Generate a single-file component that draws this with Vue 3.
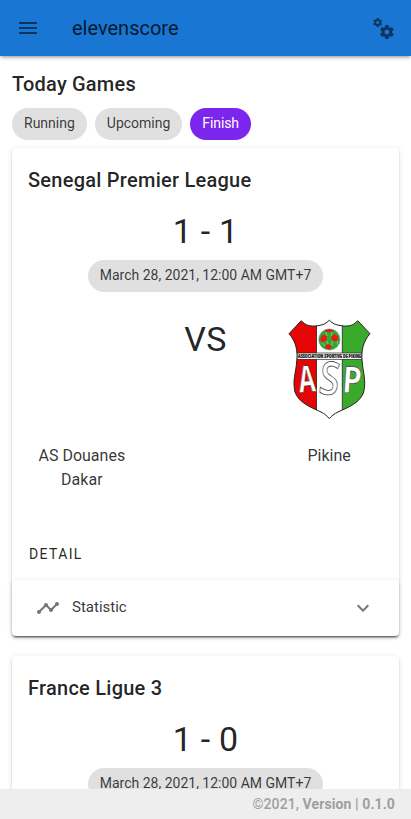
<script setup>
const filters = [
  { label: 'Running', active: false },
  { label: 'Upcoming', active: false },
  { label: 'Finish', active: true },
]
const games = [
  { league: 'Senegal Premier League', score: '1 - 1', home: 'AS Douanes Dakar', away: 'Pikine', date: 'March 28, 2021, 12:00 AM GMT+7' },
  { league: 'France Ligue 3', score: '1 - 0', home: '', away: '', date: 'March 28, 2021, 12:00 AM GMT+7' },
]
</script>

<template>
  <div class="app">
    <header class="bar">
      <svg class="icon" viewBox="0 0 24 24"><path d="M3,6H21V8H3V6M3,11H21V13H3V11M3,16H21V18H3V16Z" /></svg>
      <div class="brand">elevenscore</div>
      <svg class="icon" viewBox="0 0 24 24"><path d="M15.9,18.45C17.25,18.45 18.35,17.35 18.35,16C18.35,14.65 17.25,13.55 15.9,13.55C14.54,13.55 13.45,14.65 13.45,16C13.45,17.35 14.54,18.45 15.9,18.45M21.1,16.68L22.58,17.84C22.71,17.95 22.75,18.13 22.66,18.29L21.26,20.71C21.17,20.86 21,20.92 20.83,20.86L19.09,20.16C18.73,20.44 18.33,20.67 17.91,20.85L17.64,22.7C17.62,22.87 17.47,23 17.3,23H14.5C14.32,23 14.18,22.87 14.15,22.7L13.89,20.85C13.46,20.67 13.07,20.44 12.71,20.16L10.96,20.86C10.81,20.92 10.62,20.86 10.54,20.71L9.14,18.29C9.05,18.13 9.09,17.95 9.22,17.84L10.7,16.68L10.65,16L10.7,15.31L9.22,14.16C9.09,14.05 9.05,13.86 9.14,13.71L10.54,11.29C10.62,11.13 10.81,11.07 10.96,11.13L12.71,11.84C13.07,11.56 13.46,11.32 13.89,11.15L14.15,9.29C14.18,9.13 14.32,9 14.5,9H17.3C17.47,9 17.62,9.13 17.64,9.29L17.91,11.15C18.33,11.32 18.73,11.56 19.09,11.84L20.83,11.13C21,11.07 21.17,11.13 21.26,11.29L22.66,13.71C22.75,13.86 22.71,14.05 22.58,14.16L21.1,15.31L21.15,16L21.1,16.68M6.69,8.07C7.56,8.07 8.26,7.37 8.26,6.5C8.26,5.63 7.56,4.92 6.69,4.92A1.58,1.58 0 0,0 5.11,6.5C5.11,7.37 5.82,8.07 6.69,8.07M10.03,6.94L11,7.68C11.07,7.75 11.09,7.87 11.03,7.97L10.13,9.53C10.08,9.63 9.96,9.67 9.86,9.63L8.74,9.18L8,9.62L7.81,10.81C7.79,10.92 7.7,11 7.59,11H5.79C5.67,11 5.58,10.92 5.56,10.81L5.4,9.62L4.64,9.18L3.52,9.63C3.41,9.67 3.3,9.63 3.24,9.53L2.34,7.97C2.28,7.87 2.31,7.75 2.39,7.68L3.34,6.94L3.31,6.5L3.34,6.06L2.39,5.32C2.31,5.25 2.28,5.13 2.34,5.03L3.24,3.47C3.3,3.37 3.41,3.33 3.52,3.38L4.63,3.82L5.4,3.38L5.56,2.19C5.58,2.08 5.67,2 5.79,2H7.59C7.7,2 7.79,2.08 7.81,2.19L8,3.38L8.74,3.82L9.86,3.38C9.96,3.33 10.08,3.37 10.13,3.47L11.03,5.03C11.09,5.13 11.07,5.25 11,5.32L10.03,6.06L10.06,6.5L10.03,6.94Z" /></svg>
    </header>

    <main class="content">
      <h1 class="heading">Today Games</h1>
      <div class="filters">
        <span v-for="f in filters" :key="f.label" class="chip" :class="{ active: f.active }">{{ f.label }}</span>
      </div>

      <article v-for="g in games" :key="g.league" class="card">
        <h2 class="league">{{ g.league }}</h2>
        <div class="score">{{ g.score }}</div>
        <div class="date"><span class="chip">{{ g.date }}</span></div>
        <template v-if="g.home">
          <div class="teams">
            <div class="team">
              <div class="crest"></div>
              <div class="name">{{ g.home }}</div>
            </div>
            <div class="versus">VS</div>
            <div class="team">
              <div class="crest">
                <svg class="shield" viewBox="0 0 100 112">
                  <defs>
                    <clipPath id="shield-shape">
                      <path d="M9 21.7L21.3 8.7C25.5 13.7 31 14.7 37 13.8C43 13.3 46.5 11.3 49.3 8.2C52.2 11.3 56 13.3 62 13.8C68 14.7 73.5 13.7 77.7 8.7L90 21.7C83 29.5 81 39 82.2 50C83 60 86.3 68 83.7 80C80.5 90.5 68 95.5 59 99.5C54 101.7 51 104.5 49.3 106.6C47.5 104.5 45 101.7 40 99.5C31 95.5 18.5 90.5 15 80C12.3 68 16 60 16.7 50C18 39 16 29.5 9 21.7Z" />
                    </clipPath>
                  </defs>
                  <g clip-path="url(#shield-shape)">
                    <rect width="100" height="112" fill="#fff" />
                    <rect width="36.5" height="112" fill="#e60505" />
                    <rect x="62.3" width="38" height="112" fill="#3aaa2c" />
                    <path d="M36.5 8V108M62.3 8V108" stroke="#222" stroke-width=".8" />
                    <rect x="17" y="41" width="65" height="6.3" fill="#fff" stroke="#222" stroke-width=".7" />
                  </g>
                  <circle cx="49.4" cy="27.5" r="10.6" fill="#34a72d" stroke="#777" stroke-width=".5" />
                  <path d="M44.500 18.500L49 17L54 18.500L51 20L46 20ZM40 27L43 22.500L47 24L46.500 28.500L42 30.500ZM51 24.500L55 22L58.500 25L57 29L52.500 29ZM45 34L48 32L52 34L50 37.500L46 36.500Z" fill="#e51b1b" />
                  <path d="M46 20L47 24M52 20L51 24.500M46.500 28.500L48 32M52.500 29L52 34M42 30.500L45 34M57 29L58 33" stroke="#b5d9ab" stroke-width=".6" fill="none" />
                  <text x="49.500" y="46.100" class="motto" textLength="63" lengthAdjust="spacingAndGlyphs">ASSOCIATION SPORTIVE DE PIKINE</text>
                  <g class="initials">
                    <text x="18.500" y="80" textLength="17" lengthAdjust="spacingAndGlyphs" transform="rotate(-5 28 68)">A</text>
                    <text x="39.500" y="82.500" class="middle" textLength="20" lengthAdjust="spacingAndGlyphs" transform="rotate(7 49 68)">S</text>
                    <text x="62.500" y="81" textLength="19.500" lengthAdjust="spacingAndGlyphs" transform="rotate(4 72 68)">P</text>
                  </g>
                  <path d="M9 21.7L21.3 8.7C25.5 13.7 31 14.7 37 13.8C43 13.3 46.5 11.3 49.3 8.2C52.2 11.3 56 13.3 62 13.8C68 14.7 73.5 13.7 77.7 8.7L90 21.7C83 29.5 81 39 82.2 50C83 60 86.3 68 83.7 80C80.5 90.5 68 95.5 59 99.5C54 101.7 51 104.5 49.3 106.6C47.5 104.5 45 101.7 40 99.5C31 95.5 18.5 90.5 15 80C12.3 68 16 60 16.7 50C18 39 16 29.5 9 21.7Z" fill="none" stroke="#222" stroke-width="1" />
                </svg>
              </div>
              <div class="name">{{ g.away }}</div>
            </div>
          </div>
          <div class="detail">DETAIL</div>
          <div class="panel">
            <svg class="icon" viewBox="0 0 24 24"><path d="M23,8C23,9.1 22.1,10 21,10C20.82,10 20.65,9.97 20.49,9.93L16.93,13.48C16.97,13.64 17,13.82 17,14C17,15.1 16.1,16 15,16C13.9,16 13,15.1 13,14C13,13.82 13.03,13.64 13.07,13.48L10.52,10.93C10.36,10.97 10.18,11 10,11C9.82,11 9.64,10.97 9.48,10.93L4.93,15.49C4.97,15.65 5,15.82 5,16C5,17.1 4.1,18 3,18C1.9,18 1,17.1 1,16C1,14.9 1.9,14 3,14C3.18,14 3.35,14.03 3.51,14.07L8.07,9.52C8.03,9.36 8,9.18 8,9C8,7.9 8.9,7 10,7S12,7.9 12,9C12,9.18 11.97,9.36 11.93,9.52L14.48,12.07C14.64,12.03 14.82,12 15,12C15.18,12 15.36,12.03 15.52,12.07L19.07,8.51C19.03,8.35 19,8.18 19,8A2,2 0 0,1 21,6A2,2 0 0,1 23,8Z" /></svg>
            <span class="panel-title">Statistic</span>
            <svg class="icon" viewBox="0 0 24 24"><path d="M7.41,8.58L12,13.17L16.59,8.58L18,10L12,16L6,10L7.41,8.58Z" /></svg>
          </div>
        </template>
      </article>
    </main>

    <footer class="footer">©2021,&nbsp;<b>Version | 0.1.0</b></footer>
  </div>
</template>

<style>
body {
  background: #fff;
}
</style>

<style scoped>
.app {
  box-sizing: border-box;
  height: 819px;
  overflow: hidden;
  display: flex;
  flex-direction: column;
  font-family: Roboto, sans-serif;
  font-size: 16px;
  line-height: 24px;
  color: rgba(0, 0, 0, 0.87);
  background: #fff;
}
.icon {
  width: 24px;
  height: 24px;
  flex: none;
  fill: rgba(0, 0, 0, 0.54);
}
.bar {
  box-sizing: border-box;
  flex: none;
  height: 56px;
  padding: 0 16px;
  display: flex;
  align-items: center;
  background: #1976d2;
  box-shadow: 0 2px 3px -1px rgba(0, 0, 0, 0.3), 0 2px 5px 0 rgba(0, 0, 0, 0.14);
  z-index: 1;
}
.brand {
  flex: 1;
  padding-left: 32px;
  font-size: 20px;
  color: rgba(0, 0, 0, 0.8);
}
.content {
  flex: 1;
  min-height: 0;
  overflow: hidden;
  padding: 12px 12px 0;
}
.heading,
.league {
  margin: 0;
  font-size: 20px;
  font-weight: 500;
  line-height: 32px;
  letter-spacing: 0.25px;
}
.heading {
  letter-spacing: 0.2px;
}
.filters {
  display: flex;
  gap: 8px;
  padding: 8px 0;
}
.chip {
  box-sizing: border-box;
  display: inline-flex;
  align-items: center;
  height: 32px;
  padding: 0 12px 2px;
  border-radius: 16px;
  background: #e0e0e0;
  color: rgba(0, 0, 0, 0.76);
  font-size: 14px;
  line-height: 20px;
  white-space: nowrap;
}
.chip.active {
  background: #7b26ec;
  color: #fff;
  letter-spacing: -0.1px;
}
.card {
  height: 488px;
  margin-bottom: 20px;
  border-radius: 4px;
  background: #fff;
  box-shadow: 0 3px 1px -2px rgba(0, 0, 0, 0.2), 0 2px 2px 0 rgba(0, 0, 0, 0.14), 0 1px 5px 0 rgba(0, 0, 0, 0.12);
}
.league {
  padding: 16px 16px 15px;
}
.score,
.versus {
  font-size: 34px;
  line-height: 40px;
  letter-spacing: 0.25px;
  text-align: center;
}
.date {
  display: flex;
  justify-content: center;
  padding-top: 9px;
}
.teams {
  display: grid;
  grid-template-columns: repeat(3, 1fr);
  height: 244px;
  padding: 20px 8px 0;
  box-sizing: border-box;
}
.versus {
  padding-top: 7px;
}
.crest {
  height: 132px;
}
.shield {
  display: block;
  width: 100px;
  height: 112px;
  margin: 0 11px 0 auto;
}
.name {
  text-align: center;
  padding: 0 16px;
  color: rgba(0, 0, 0, 0.8);
}
.detail {
  height: 44px;
  padding: 6px 17px 0;
  box-sizing: border-box;
  line-height: 25px;
  font-size: 14px;
  letter-spacing: 1.35px;
}
.panel {
  display: flex;
  align-items: center;
  height: 56px;
  padding: 0 24px;
  border-radius: 4px;
  box-shadow: 0 3px 1px -2px rgba(0, 0, 0, 0.2), 0 2px 2px 0 rgba(0, 0, 0, 0.14), 0 1px 5px 0 rgba(0, 0, 0, 0.12);
}
.panel-title {
  flex: 1;
  padding: 0 0 2px 12px;
  font-size: 15px;
  color: rgba(0, 0, 0, 0.8);
}
.footer {
  flex: none;
  display: flex;
  justify-content: flex-end;
  align-items: center;
  height: 30px;
  padding: 0 16px;
  background: #eee;
  color: #9e9e9e;
  font-size: 14px;
  font-weight: 500;
  letter-spacing: 0.1px;
}
.footer b {
  font-weight: 700;
}
.motto {
  font: 800 5px "Open Sans", sans-serif;
  text-anchor: middle;
  fill: #111;
  stroke: #111;
  stroke-width: 0.2px;
}
.initials text {
  font: 700 37px "Open Sans", sans-serif;
  fill: #fff;
  stroke: #333;
  stroke-width: 0.6px;
}
.initials .middle {
  font-weight: 600;
  font-size: 46px;
  stroke: #444;
  stroke-width: 0.8px;
}
</style>
